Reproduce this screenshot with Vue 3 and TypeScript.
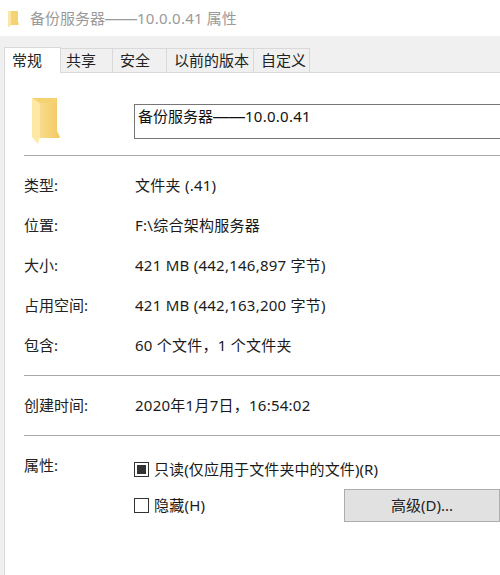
<script setup lang="ts">
const tabs = ['常规', '共享', '安全', '以前的版本', '自定义']
const tabWidths = ['57px', '52px', '54px', '87px', '56px']
const rows1 = [
  ['类型:', '文件夹 (.41)'],
  ['位置:', 'F:\\综合架构服务器'],
  ['大小:', '421 MB (442,146,897 字节)'],
  ['占用空间:', '421 MB (442,163,200 字节)'],
  ['包含:', '60 个文件，1 个文件夹'],
]
</script>

<template>
  <div class="win">
    <header class="title">
      <svg class="title-icon" width="12" height="17" viewBox="0 0 12 17">
        <path d="M0 1h10v11l1 2-1 1H3l-3 2z" fill="#f5d374" />
        <path d="M0 1h3v13l-3 3z" fill="#fbe6a6" />
      </svg>
      <span>备份服务器<span class="dash">——</span><span class="wide">10.0.0.41</span> 属性</span>
    </header>
    <div class="tabstrip">
      <div class="tabs">
        <div
          v-for="(t, i) in tabs"
          :key="t"
          class="tab"
          :class="{ active: i === 0 }"
          :style="{ width: tabWidths[i] }"
        >{{ t }}</div>
      </div>
      <main class="panel">
        <div class="head">
          <svg class="folder" width="28" height="48" viewBox="0 0 28 48">
            <defs>
              <linearGradient id="front" x1="0" y1="0" x2="1" y2="0">
                <stop offset="0" stop-color="#fbe3a0" />
                <stop offset="1" stop-color="#f2c95f" />
              </linearGradient>
            </defs>
            <path d="M0 1h25v33l3 6-1 1H8V8z" fill="url(#front)" />
            <path d="M0 1h24v5H8z" fill="#f5d272" />
            <path d="M0 1l8 6v33l-2 7-6-7z" fill="#fde8a6" />
          </svg>
          <div class="name">备份服务器<span class="dash">——</span><span class="wide">10.0.0.41</span></div>
        </div>
        <hr class="rule" />
        <section class="group first">
          <div v-for="r in rows1" :key="r[0]" class="row">
            <span class="label">{{ r[0] }}</span>
            <span class="wide">{{ r[1] }}</span>
          </div>
        </section>
        <hr class="rule" />
        <section class="group created">
          <div class="row">
            <span class="label">创建时间:</span>
            <span class="wide">2020年1月7日，16:54:02</span>
          </div>
        </section>
        <hr class="rule" />
        <section class="attrs">
          <span class="label attr-label">属性:</span>
          <div class="attr-body">
            <div class="check-row">
              <span class="box"><i class="mark"></i></span>
              <span class="slight">只读(仅应用于文件夹中的文件)(R)</span>
            </div>
            <div class="check-row second">
              <span class="box"></span>
              <span class="wide">隐藏(H)</span>
              <button class="adv">高级(D)...</button>
            </div>
          </div>
        </section>
      </main>
    </div>
  </div>
</template>

<style>
html, body { margin: 0; background: #fff; overflow: hidden; }
</style>

<style scoped>
.win {
  width: 500px;
  height: 575px;
  overflow: hidden;
  background: #fff;
  color: #1a1a1a;
  font-family: "Noto Sans", "Noto Sans CJK SC", sans-serif;
  font-size: 15px;
  line-height: 20px;
  display: flex;
  flex-direction: column;
}
.wide { letter-spacing: 0.25px; }
.slight { letter-spacing: 0.1px; }
.dash {
  font-family: "Liberation Sans", sans-serif;
  font-size: 16px;
}
.title {
  height: 36px;
  flex: none;
  display: flex;
  align-items: center;
  gap: 10px;
  padding-left: 8px;
  font-size: 15px;
  color: #9a9a9a;
}
.title-icon { flex: none; }
.tabstrip {
  flex: 1;
  background: #f0f0f0;
  padding: 11px 0 0 4px;
  display: flex;
  flex-direction: column;
}
.tabs {
  display: flex;
  height: 25px;
  align-items: flex-end;
  position: relative;
  z-index: 1;
}
.tab {
  box-sizing: border-box;
  height: 24px;
  border: 1px solid #d9d9d9;
  border-left: 0;
  border-bottom: 0;
  line-height: 23px;
  color: #222;
  padding-left: 7px;
  white-space: nowrap;
}
.tab:nth-child(2) { padding-left: 5px; }
.tab.active {
  height: 26px;
  margin-bottom: -1px;
  background: #fff;
  border-left: 1px solid #d9d9d9;
  line-height: 24px;
}
.panel {
  flex: 1;
  background: #fff;
  border-top: 1px solid #d9d9d9;
  border-left: 1px solid #d9d9d9;
  padding-left: 19px;
  display: flex;
  flex-direction: column;
}
.head {
  height: 82px;
  display: flex;
  align-items: flex-start;
}
.folder { margin: 24px 0 0 8px; flex: none; }
.name {
  box-sizing: border-box;
  margin: 31px 0 0 74px;
  width: 400px;
  height: 35px;
  border: 1px solid #767676;
  border-right: 0;
  padding: 1px 3px;
  color: #111;
}
.rule {
  margin: 0;
  border: 0;
  height: 1px;
  background: #a8a8a8;
  flex: none;
}
.group.first { padding: 9px 0 10px; }
.group.created { padding: 9px 0 10px; }
.row {
  height: 40px;
  display: flex;
  align-items: center;
}
.label { width: 111px; flex: none; color: #222; }
.attrs { display: flex; padding-top: 19px; }
.attr-label { line-height: 20px; width: 110px; }
.attr-body { flex: 1; display: flex; flex-direction: column; }
.check-row {
  display: flex;
  align-items: center;
  gap: 5px;
  height: 24px;
  margin-top: 2px;
}
.check-row.second { margin-top: 12px; position: relative; }
.box {
  box-sizing: border-box;
  width: 15px;
  height: 15px;
  border: 1px solid #333;
  display: flex;
  align-items: center;
  justify-content: center;
  flex: none;
}
.mark { width: 9px; height: 9px; background: #333; display: block; }
.adv {
  margin-left: auto;
  box-sizing: border-box;
  width: 156px;
  height: 33px;
  background: #e1e1e1;
  border: 1px solid #adadad;
  font: inherit;
  color: #222;
  padding: 0;
}
</style>
